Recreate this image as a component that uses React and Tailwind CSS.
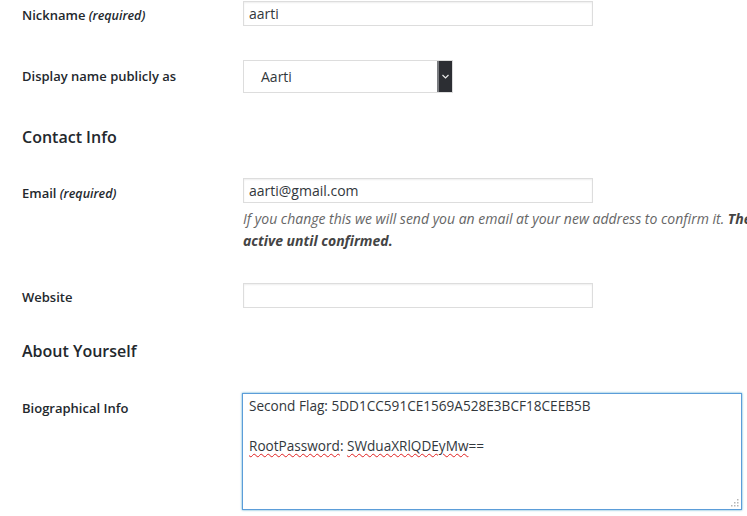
import React from 'react'

const font = { fontFamily: '"Open Sans", "Noto Sans", sans-serif' }

function Label({ children, className = '' }) {
  return (
    <div className={`w-[221px] shrink-0 text-[13px] font-semibold text-[#23282d] ${className}`}>
      {children}
    </div>
  )
}

function Req() {
  return <em className="font-semibold italic text-[12.5px]"> (required)</em>
}

function TextInput({ value = '' }) {
  return (
    <div className="w-[350px] h-[25px] border border-[#dddddd] bg-white shadow-[inset_0_1px_2px_rgba(0,0,0,0.07)] px-[5px] flex items-center text-[14px] text-[#32373c]">
      {value}
    </div>
  )
}

function Heading({ children, className = '' }) {
  return <h2 className={`text-[16px] leading-[24px] font-semibold text-[#23282d] ${className}`}>{children}</h2>
}

export default function App() {
  return (
    <div className="w-[747px] h-[516px] overflow-hidden bg-white" style={font}>
      <div className="pl-[22px] pt-[1px] w-[1000px]">
        {/* nickname */}
        <div className="flex items-center h-[25px]">
          <Label className="pt-[4px]">Nickname<Req /></Label>
          <TextInput value="aarti" />
        </div>

        {/* display name */}
        <div className="flex items-center h-[33px] mt-[34px]">
          <Label>Display name publicly as</Label>
          <div className="relative w-[210px] h-[33px] border border-[#dddddd] bg-white flex items-center pl-[17px] text-[14px] text-[#32373c]">
            Aarti
            <div className="absolute right-0 top-0 bottom-0 w-[15px] bg-[#2c2e33] border-l-2 border-[#7a7c80] flex items-center justify-center">
              <svg width="7" height="5" viewBox="0 0 7 5">
                <path d="M0.5 1 L3.5 4 L6.5 1" fill="none" stroke="#e8e8e8" strokeWidth="1.2" />
              </svg>
            </div>
          </div>
        </div>

        <Heading className="mt-[32px]">Contact Info</Heading>

        {/* email */}
        <div className="flex items-start mt-[29px]">
          <Label className="leading-[25px] pt-[3px]">Email<Req /></Label>
          <div>
            <TextInput value="aarti@gmail.com" />
            <p className="mt-[5px] text-[14px] leading-[22px] italic text-[#666666] whitespace-nowrap">
              If you change this we will send you an email at your new address to confirm it.{' '}
              <strong className="font-bold text-[#444444]">The new address will not become</strong>
              <br />
              <strong className="font-bold text-[#444444]">active until confirmed.</strong>
            </p>
          </div>
        </div>

        {/* website */}
        <div className="flex items-center h-[25px] mt-[31px]">
          <Label className="pt-[4px]">Website</Label>
          <TextInput />
        </div>

        <Heading className="mt-[31px]">About Yourself</Heading>

        {/* bio */}
        <div className="flex items-start mt-[30px]">
          <Label className="leading-[20px] mt-[5px]">Biographical Info</Label>
          <div className="relative -ml-[1px] w-[500px] h-[117px] border border-[#5b9dd9] shadow-[0_0_2px_rgba(30,140,190,0.8)] bg-white px-[6px] pt-[2px] text-[13.6px] leading-[20px] text-[#32373c]">
            <div>Second Flag: 5DD1CC591CE1569A528E3BCF18CEEB5B</div>
            <div>&nbsp;</div>
            <div>
              <span className="underline decoration-wavy decoration-[#e02020] decoration-1 underline-offset-[2px]">RootPassword</span>:{' '}
              <span className="underline decoration-wavy decoration-[#e02020] decoration-1 underline-offset-[2px]">SWduaXRlQDEyMw</span>==
            </div>
            <svg className="absolute right-[2px] bottom-[2px]" width="10" height="10" viewBox="0 0 10 10">
              <g fill="#b5b5b5">
                <rect x="8" y="2" width="1.5" height="1.5" />
                <rect x="8" y="5" width="1.5" height="1.5" />
                <rect x="5" y="5" width="1.5" height="1.5" />
                <rect x="8" y="8" width="1.5" height="1.5" />
                <rect x="5" y="8" width="1.5" height="1.5" />
                <rect x="2" y="8" width="1.5" height="1.5" />
              </g>
            </svg>
          </div>
        </div>
      </div>
    </div>
  )
}
